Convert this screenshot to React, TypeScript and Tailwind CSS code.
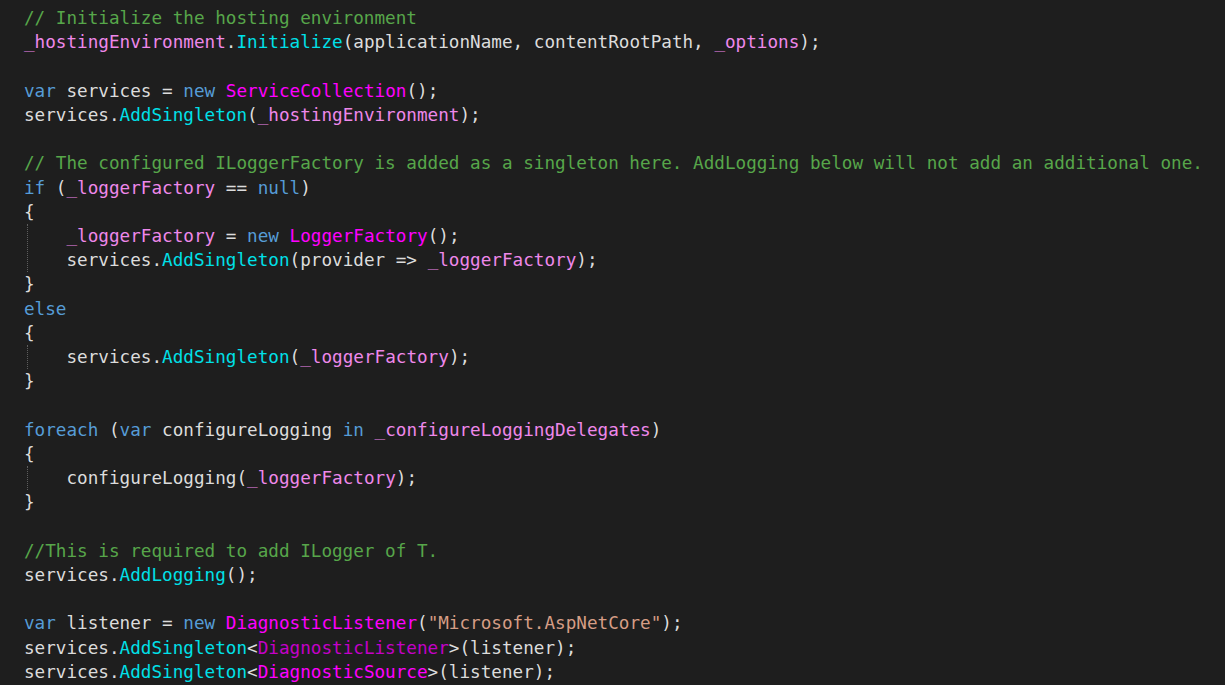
type Kind = 'p' | 'c' | 'k' | 'm' | 't' | 'g' | 'f' | 's';
type Tok = [Kind, string];

const colors: Record<Kind, string> = {
  p: 'text-[#dcdcdc]',
  c: 'text-[#57a64a]',
  k: 'text-[#569cd6]',
  m: 'text-[#00e0e8]',
  t: 'text-[#ff00ff]',
  g: 'text-[#c400c8]',
  f: 'text-[#ee88ea]',
  s: 'text-[#d69d85]',
};

function Line({ toks }: { toks: Tok[] }) {
  return (
    <div className="h-[24.22px] whitespace-pre">
      {toks.map(([k, t], i) => (
        <span key={i} className={colors[k]}>
          {t}
        </span>
      ))}
    </div>
  );
}

function Block({ lines }: { lines: Tok[][] }) {
  return (
    <div className="ml-[3px] border-l border-dotted border-[#5e5e5e] pl-[38.5px]">
      {lines.map((l, i) => (
        <Line key={i} toks={l} />
      ))}
    </div>
  );
}

const open: Tok[] = [['p', '{']];
const close: Tok[] = [['p', '}']];
const empty: Tok[] = [];

export default function App() {
  return (
    <div
      className="w-[1225px] h-[685px] overflow-hidden bg-[#1e1e1e] pl-[24px] pt-[6px] text-[17.65px] leading-[24.22px]"
      style={{ fontFamily: '"DejaVu Sans Mono", "Liberation Mono", monospace' }}
    >
      <Line toks={[['c', '// Initialize the hosting environment']]} />
      <Line
        toks={[
          ['f', '_hostingEnvironment'],
          ['p', '.'],
          ['m', 'Initialize'],
          ['p', '(applicationName, contentRootPath, '],
          ['f', '_options'],
          ['p', ');'],
        ]}
      />
      <Line toks={empty} />
      <Line
        toks={[
          ['k', 'var'],
          ['p', ' services = '],
          ['k', 'new'],
          ['p', ' '],
          ['t', 'ServiceCollection'],
          ['p', '();'],
        ]}
      />
      <Line
        toks={[
          ['p', 'services.'],
          ['m', 'AddSingleton'],
          ['p', '('],
          ['f', '_hostingEnvironment'],
          ['p', ');'],
        ]}
      />
      <Line toks={empty} />
      <Line
        toks={[
          [
            'c',
            '// The configured ILoggerFactory is added as a singleton here. AddLogging below will not add an additional one.',
          ],
        ]}
      />
      <Line
        toks={[
          ['k', 'if'],
          ['p', ' ('],
          ['f', '_loggerFactory'],
          ['p', ' == '],
          ['k', 'null'],
          ['p', ')'],
        ]}
      />
      <Line toks={open} />
      <Block
        lines={[
          [
            ['f', '_loggerFactory'],
            ['p', ' = '],
            ['k', 'new'],
            ['p', ' '],
            ['t', 'LoggerFactory'],
            ['p', '();'],
          ],
          [
            ['p', 'services.'],
            ['m', 'AddSingleton'],
            ['p', '(provider => '],
            ['f', '_loggerFactory'],
            ['p', ');'],
          ],
        ]}
      />
      <Line toks={close} />
      <Line toks={[['k', 'else']]} />
      <Line toks={open} />
      <Block
        lines={[
          [
            ['p', 'services.'],
            ['m', 'AddSingleton'],
            ['p', '('],
            ['f', '_loggerFactory'],
            ['p', ');'],
          ],
        ]}
      />
      <Line toks={close} />
      <Line toks={empty} />
      <Line
        toks={[
          ['k', 'foreach'],
          ['p', ' ('],
          ['k', 'var'],
          ['p', ' configureLogging '],
          ['k', 'in'],
          ['p', ' '],
          ['f', '_configureLoggingDelegates'],
          ['p', ')'],
        ]}
      />
      <Line toks={open} />
      <Block
        lines={[
          [
            ['p', 'configureLogging('],
            ['f', '_loggerFactory'],
            ['p', ');'],
          ],
        ]}
      />
      <Line toks={close} />
      <Line toks={empty} />
      <Line toks={[['c', '//This is required to add ILogger of T.']]} />
      <Line toks={[['p', 'services.'], ['m', 'AddLogging'], ['p', '();']]} />
      <Line toks={empty} />
      <Line
        toks={[
          ['k', 'var'],
          ['p', ' listener = '],
          ['k', 'new'],
          ['p', ' '],
          ['t', 'DiagnosticListener'],
          ['p', '('],
          ['s', '"Microsoft.AspNetCore"'],
          ['p', ');'],
        ]}
      />
      <Line
        toks={[
          ['p', 'services.'],
          ['m', 'AddSingleton'],
          ['p', '<'],
          ['g', 'DiagnosticListener'],
          ['p', '>(listener);'],
        ]}
      />
      <Line
        toks={[
          ['p', 'services.'],
          ['m', 'AddSingleton'],
          ['p', '<'],
          ['t', 'DiagnosticSource'],
          ['p', '>(listener);'],
        ]}
      />
    </div>
  );
}
